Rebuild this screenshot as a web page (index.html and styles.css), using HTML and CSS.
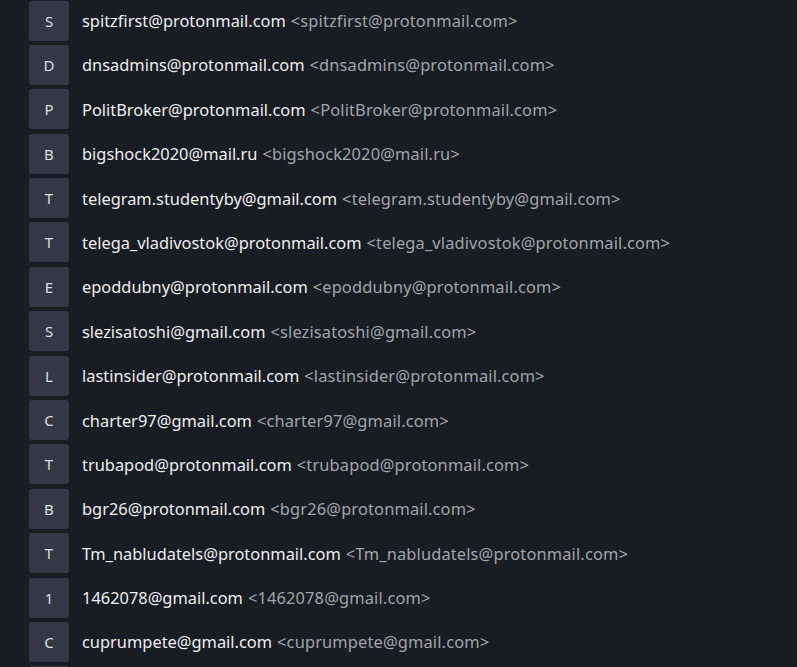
FILE: index.html
```html
<!DOCTYPE html>
<html lang="en">

<head>
    <meta charset="UTF-8">
    <meta name="viewport" content="width=device-width, initial-scale=1.0">
    <title>Contacts</title>
    <link rel="stylesheet" href="styles.css">
</head>

<body>
    <ul class="contact-list">
        <li class="contact"><span class="avatar">S</span><span class="name">spitzfirst@protonmail.com</span><span class="address">&lt;spitzfirst@protonmail.com&gt;</span></li>
        <li class="contact"><span class="avatar">D</span><span class="name">dnsadmins@protonmail.com</span><span class="address">&lt;dnsadmins@protonmail.com&gt;</span></li>
        <li class="contact"><span class="avatar">P</span><span class="name">PolitBroker@protonmail.com</span><span class="address">&lt;PolitBroker@protonmail.com&gt;</span></li>
        <li class="contact"><span class="avatar">B</span><span class="name">bigshock2020@mail.ru</span><span class="address">&lt;bigshock2020@mail.ru&gt;</span></li>
        <li class="contact"><span class="avatar">T</span><span class="name">telegram.studentyby@gmail.com</span><span class="address">&lt;telegram.studentyby@gmail.com&gt;</span></li>
        <li class="contact"><span class="avatar">T</span><span class="name">telega_vladivostok@protonmail.com</span><span class="address">&lt;telega_vladivostok@protonmail.com&gt;</span></li>
        <li class="contact"><span class="avatar">E</span><span class="name">epoddubny@protonmail.com</span><span class="address">&lt;epoddubny@protonmail.com&gt;</span></li>
        <li class="contact"><span class="avatar">S</span><span class="name">slezisatoshi@gmail.com</span><span class="address">&lt;slezisatoshi@gmail.com&gt;</span></li>
        <li class="contact"><span class="avatar">L</span><span class="name">lastinsider@protonmail.com</span><span class="address">&lt;lastinsider@protonmail.com&gt;</span></li>
        <li class="contact"><span class="avatar">C</span><span class="name">charter97@gmail.com</span><span class="address">&lt;charter97@gmail.com&gt;</span></li>
        <li class="contact"><span class="avatar">T</span><span class="name">trubapod@protonmail.com</span><span class="address">&lt;trubapod@protonmail.com&gt;</span></li>
        <li class="contact"><span class="avatar">B</span><span class="name">bgr26@protonmail.com</span><span class="address">&lt;bgr26@protonmail.com&gt;</span></li>
        <li class="contact"><span class="avatar">T</span><span class="name">Tm_nabludatels@protonmail.com</span><span class="address">&lt;Tm_nabludatels@protonmail.com&gt;</span></li>
        <li class="contact"><span class="avatar">1</span><span class="name">1462078@gmail.com</span><span class="address">&lt;1462078@gmail.com&gt;</span></li>
        <li class="contact"><span class="avatar">C</span><span class="name">cuprumpete@gmail.com</span><span class="address">&lt;cuprumpete@gmail.com&gt;</span></li>
        <!-- next row is only just visible at the bottom edge -->
        <li class="contact"><span class="avatar"></span></li>
    </ul>
</body>

</html>
```

FILE: styles.css
```css
body {
    font-family: 'Noto Sans', sans-serif;
    background-color: #1a1c23;
    color: #e6e7ea;
    margin: 0;
    padding: 0;
    overflow: hidden;
}

.contact-list {
    list-style-type: none;
    margin: 0;
    padding: 0.5px 0 0 29px;
}

.contact {
    display: flex;
    align-items: center;
    height: 40px;
    margin-bottom: 4.4px;
    font-size: 16.4px;
    white-space: nowrap;
}

.avatar {
    width: 40px;
    height: 40px;
    flex-shrink: 0;
    display: flex;
    align-items: center;
    justify-content: center;
    background-color: #353844;
    border-radius: 3px;
    font-size: 15px;
    color: #dcdde2;
    margin-right: 13px;
}

.name {
    color: #eeeef0;
}

.address {
    color: #a2a4ab;
    margin-left: 5px;
    letter-spacing: 0.15px;
}
```
